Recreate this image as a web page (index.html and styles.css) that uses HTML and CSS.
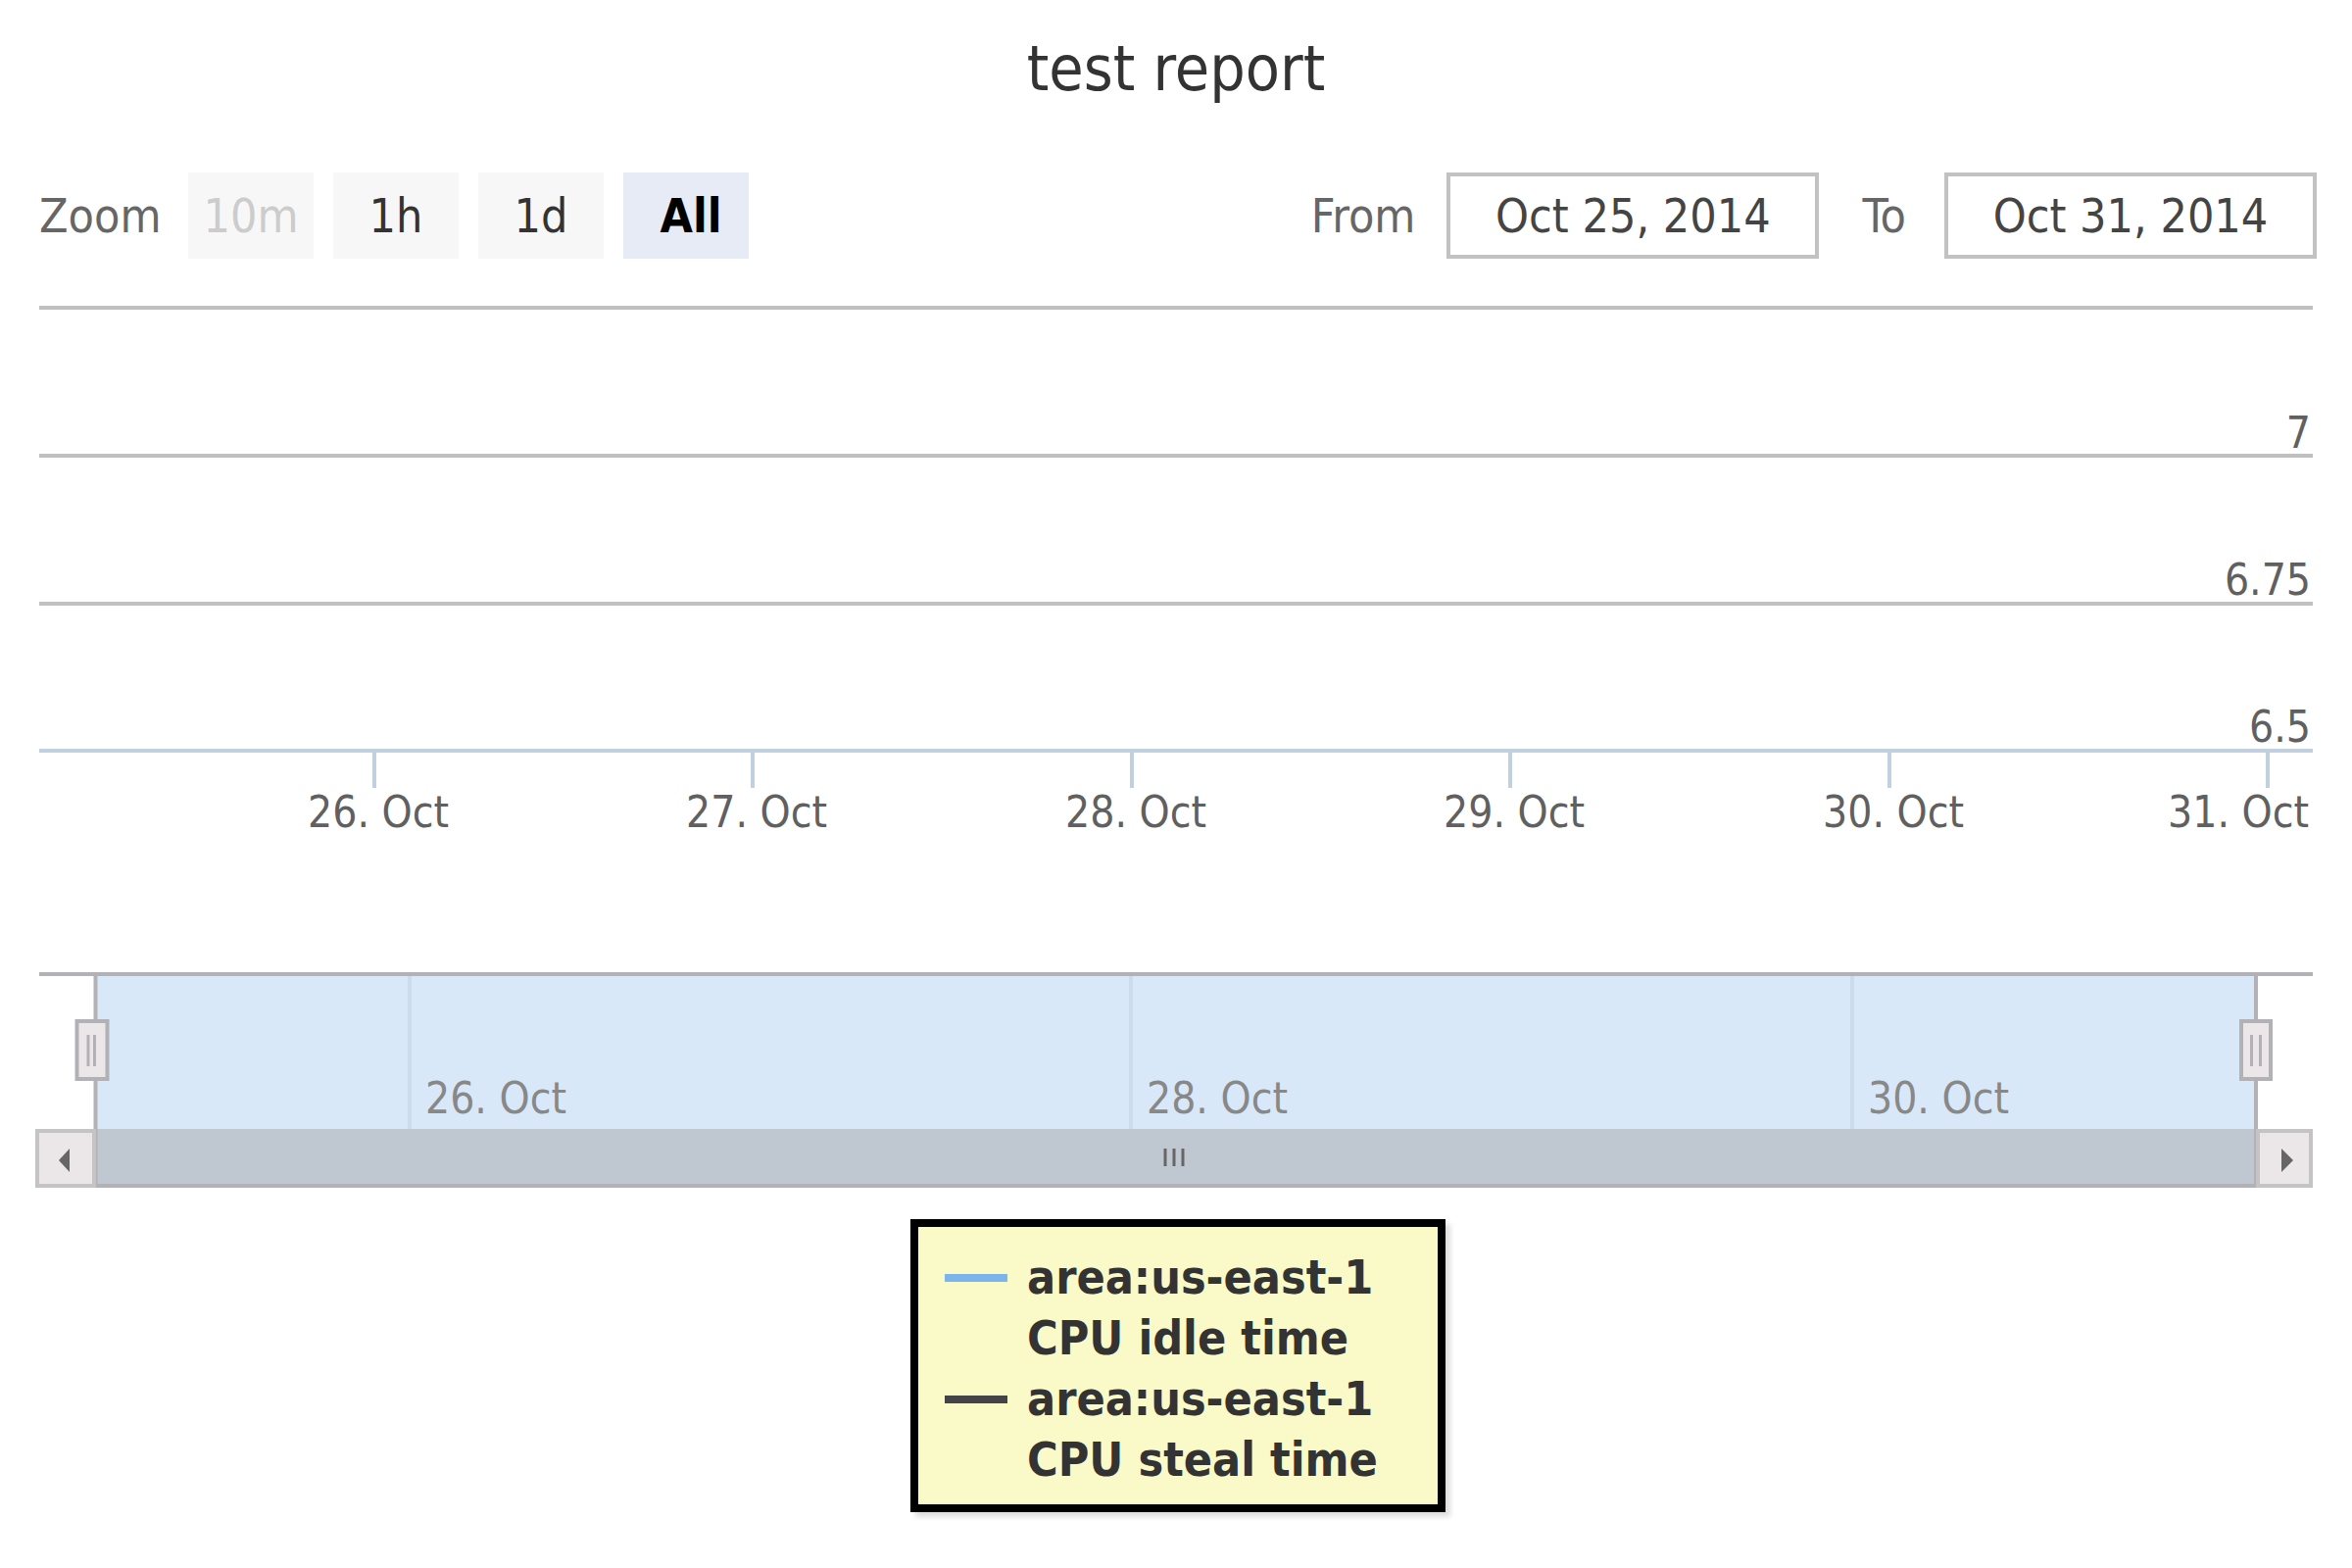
FILE: index.html
```html
<!DOCTYPE html>
<html lang="en">
<head>
<meta charset="utf-8">
<title>test report</title>
<link rel="stylesheet" href="styles.css">
</head>
<body>
<div class="page">
  <h1 class="title">test report</h1>

  <div class="range">
    <span class="zoom-label">Zoom</span>
    <span class="btn disabled">10m</span>
    <span class="btn">1h</span>
    <span class="btn">1d</span>
    <span class="btn active">All</span>
    <span class="spacer"></span>
    <span class="lbl from">From</span>
    <span class="date">Oct 25, 2014</span>
    <span class="lbl to">To</span>
    <span class="date last">Oct 31, 2014</span>
  </div>

  <svg class="chart" viewBox="0 264 2400 956" xmlns="http://www.w3.org/2000/svg">
    <!-- plot grid -->
    <g class="grid">
      <line x1="40" y1="314" x2="2360" y2="314"/>
      <line x1="40" y1="465" x2="2360" y2="465"/>
      <line x1="40" y1="616" x2="2360" y2="616"/>
    </g>
    <line class="axis" x1="40" y1="766" x2="2360" y2="766"/>
    <g class="ticks">
      <line x1="382" y1="766" x2="382" y2="804"/>
      <line x1="768" y1="766" x2="768" y2="804"/>
      <line x1="1155" y1="766" x2="1155" y2="804"/>
      <line x1="1541" y1="766" x2="1541" y2="804"/>
      <line x1="1928" y1="766" x2="1928" y2="804"/>
      <line x1="2314" y1="766" x2="2314" y2="804"/>
    </g>
    <g class="ylab">
      <text x="2358" y="457">7</text>
      <text x="2358" y="607">6.75</text>
      <text x="2358" y="757">6.5</text>
    </g>
    <g class="xlab">
      <text x="386" y="844">26. Oct</text>
      <text x="772" y="844">27. Oct</text>
      <text x="1159" y="844">28. Oct</text>
      <text x="1545" y="844">29. Oct</text>
      <text x="1932" y="844">30. Oct</text>
      <text class="end" x="2356" y="844">31. Oct</text>
    </g>

    <!-- navigator -->
    <rect class="mask" x="98" y="994" width="2204" height="158"/>
    <g class="navgrid">
      <line x1="418" y1="996" x2="418" y2="1152"/>
      <line x1="1154" y1="996" x2="1154" y2="1152"/>
      <line x1="1890" y1="996" x2="1890" y2="1152"/>
    </g>
    <g class="navlab">
      <text x="434" y="1136">26. Oct</text>
      <text x="1170" y="1136">28. Oct</text>
      <text x="1906" y="1136">30. Oct</text>
    </g>
    <g class="outline">
      <line x1="40" y1="994" x2="2360" y2="994"/>
      <line x1="97.5" y1="994" x2="97.5" y2="1152"/>
      <line x1="2302" y1="994" x2="2302" y2="1152"/>
    </g>

    <!-- scrollbar -->
    <rect class="thumb" x="97" y="1152" width="2205" height="56"/>
    <line class="track-line" x1="97" y1="1210" x2="2302" y2="1210"/>
    <line class="track-line" x1="97.5" y1="1152" x2="97.5" y2="1212"/>
    <line class="track-line" x1="2302" y1="1152" x2="2302" y2="1212"/>
    <g class="rifle">
      <line x1="1189" y1="1172" x2="1189" y2="1190"/>
      <line x1="1198" y1="1172" x2="1198" y2="1190"/>
      <line x1="1207" y1="1172" x2="1207" y2="1190"/>
    </g>
    <rect class="sbtn" x="38" y="1154" width="58" height="56"/>
    <polygon class="arrow" points="60,1184 71,1172 71,1196"/>
    <rect class="sbtn" x="2304" y="1154" width="54" height="56"/>
    <polygon class="arrow" points="2328,1172 2340,1184 2328,1196"/>

    <!-- handles -->
    <rect class="handle" x="78.5" y="1042" width="31" height="59"/>
    <line class="grip" x1="90" y1="1056" x2="90" y2="1088"/>
    <line class="grip" x1="96.5" y1="1056" x2="96.5" y2="1088"/>
    <rect class="handle" x="2287" y="1042" width="30" height="59"/>
    <line class="grip" x1="2297.5" y1="1056" x2="2297.5" y2="1088"/>
    <line class="grip" x1="2306.5" y1="1056" x2="2306.5" y2="1088"/>
  </svg>

  <div class="legend-wrap">
    <div class="legend">
      <div class="item">
        <span class="sym blue"></span>
        <span class="item-text"><span class="ln">area:us-east-1</span><span class="ln">CPU idle time</span></span>
      </div>
      <div class="item">
        <span class="sym dark"></span>
        <span class="item-text"><span class="ln">area:us-east-1</span><span class="ln">CPU steal time</span></span>
      </div>
    </div>
  </div>
</div>
</body>
</html>
```
FILE: styles.css
```css
html, body {
  margin: 0;
  padding: 0;
  background: #ffffff;
}

body {
  font-family: "DejaVu Sans Condensed", "DejaVu Sans", sans-serif;
  font-stretch: condensed;
}

.page {
  width: 2400px;
  height: 1600px;
  box-sizing: border-box;
  padding: 0 40px;
  overflow: hidden;
}

.title {
  margin: 38px 0 0;
  height: 64px;
  font-size: 64px;
  line-height: 64px;
  font-weight: normal;
  text-align: center;
  color: #333333;
}

.range {
  display: flex;
  align-items: center;
  height: 88px;
  margin-top: 74px;
  font-size: 48px;
  line-height: 88px;
}

.zoom-label {
  width: 152px;
  color: #666666;
}

.btn {
  box-sizing: border-box;
  width: 128px;
  height: 88px;
  margin-right: 20px;
  text-align: center;
  background: #f7f7f7;
  color: #333333;
}

.btn.disabled {
  color: #cccccc;
}

.btn.active {
  padding-left: 10px;
  background: #e6ebf5;
  color: #000000;
  font-weight: bold;
  margin-right: 0;
}

.spacer {
  flex: 1;
}

.lbl {
  color: #666666;
}

.from {
  margin-right: 32px;
}

.to {
  margin: 0 39px 0 44px;
}

.date {
  box-sizing: border-box;
  width: 380px;
  height: 88px;
  border: 4px solid #c2c2c2;
  line-height: 80px;
  text-align: center;
  color: #444444;
}

.date.last {
  margin-right: -4px;
}

.chart {
  display: block;
  width: 2400px;
  height: 956px;
  margin-left: -40px;
  overflow: visible;
}

.grid line {
  stroke: #c0c0c0;
  stroke-width: 4;
}

.axis {
  stroke: #c0d0e0;
  stroke-width: 4;
}

.ticks line {
  stroke: #c0d0e0;
  stroke-width: 4;
}

.ylab text {
  font-size: 44px;
  fill: #606060;
  text-anchor: end;
}

.xlab text {
  font-size: 44px;
  fill: #606060;
  text-anchor: middle;
}

.xlab text.end {
  text-anchor: end;
}

.mask {
  fill: #d9e8f8;
}

.navgrid line {
  stroke: #cddcec;
  stroke-width: 4;
}

.navlab text {
  font-size: 44px;
  fill: #888888;
}

.outline line {
  stroke: #b2b1b6;
  stroke-width: 4;
}

.thumb {
  fill: #bfc8d1;
}

.track-line {
  stroke: #b2b1b6;
  stroke-width: 4;
}

.rifle line {
  stroke: #666666;
  stroke-width: 3;
}

.sbtn {
  fill: #ebe7e8;
  stroke: #c4c4c4;
  stroke-width: 4;
}

.arrow {
  fill: #666666;
}

.handle {
  fill: #ebe7e8;
  stroke: #b2b1b6;
  stroke-width: 4;
}

.grip {
  stroke: #b2b1b6;
  stroke-width: 3;
}

.legend-wrap {
  display: flex;
  justify-content: center;
  margin-top: 24px;
}

.legend {
  box-sizing: border-box;
  width: 546px;
  height: 299px;
  margin-left: 4px;
  padding: 20px 0 0 27px;
  border: 8px solid #000000;
  background: #fafac8;
  box-shadow: 5px 5px 5px rgba(0, 0, 0, 0.13);
  font-size: 48px;
  font-weight: bold;
  line-height: 62px;
  color: #333333;
}

.item {
  display: flex;
  align-items: flex-start;
}

.sym {
  flex: none;
  width: 64px;
  height: 8px;
  margin: 28px 20px 0 0;
}

.sym.blue {
  background: #7cb5ec;
}

.sym.dark {
  background: #434348;
}

.item-text .ln {
  display: block;
  white-space: nowrap;
}
```
